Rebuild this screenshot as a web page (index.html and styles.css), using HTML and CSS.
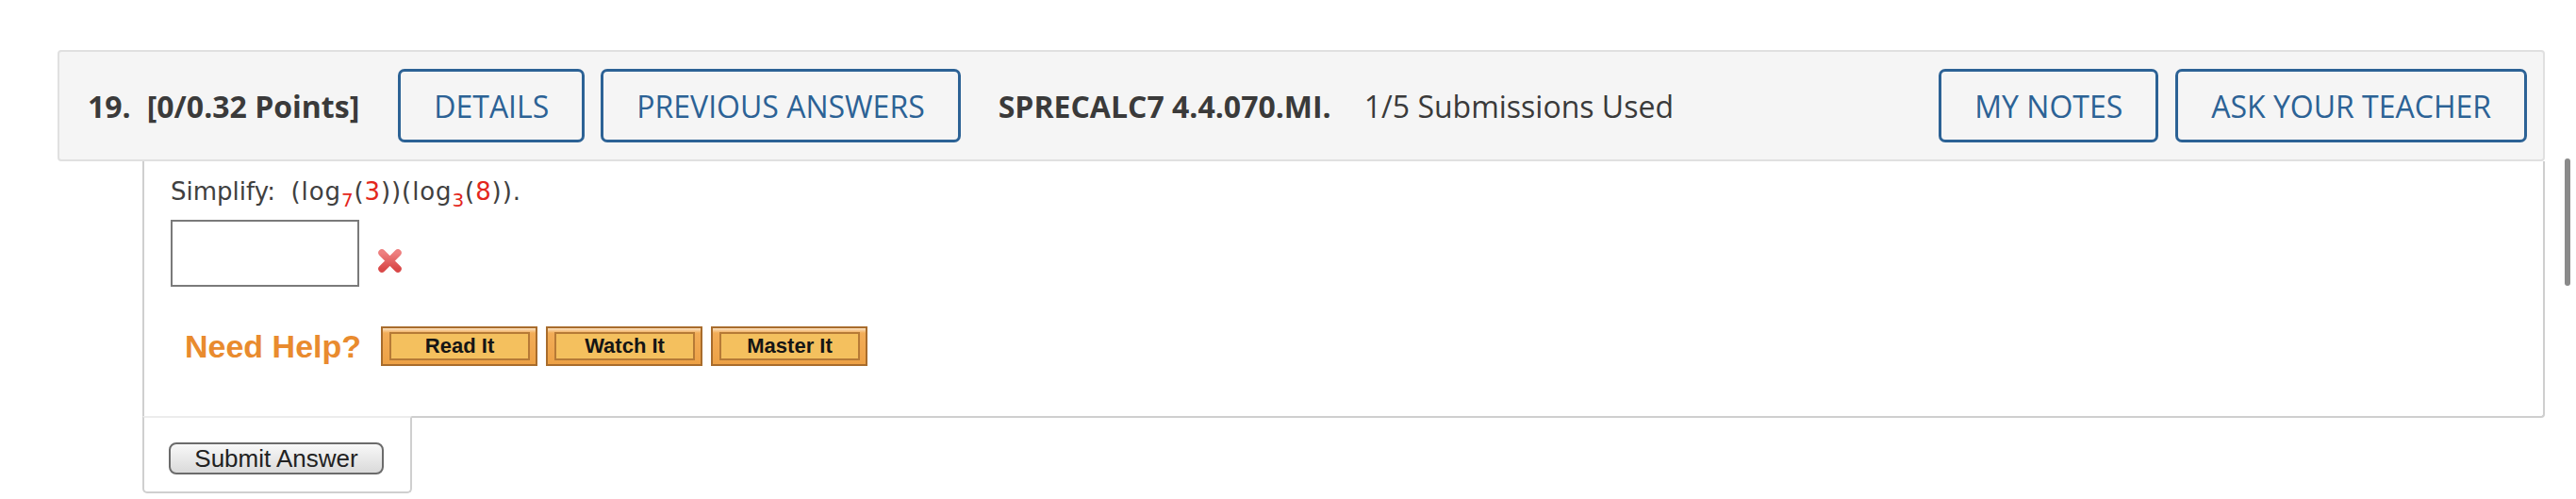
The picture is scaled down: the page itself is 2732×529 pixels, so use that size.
FILE: index.html
```html
<!DOCTYPE html>
<html lang="en">
<head>
<meta charset="utf-8">
<title>Question 19</title>
<link rel="stylesheet" href="styles.css">
</head>
<body>
<div class="page">
  <div class="question-header">
    <span class="q-num">19.</span>
    <span class="q-points">[0/0.32 Points]</span>
    <button class="hdr-btn btn-details">DETAILS</button>
    <button class="hdr-btn btn-prev">PREVIOUS ANSWERS</button>
    <span class="q-code">SPRECALC7 4.4.070.MI.</span>
    <span class="q-subs">1/5 Submissions Used</span>
    <span class="spacer"></span>
    <button class="hdr-btn">MY NOTES</button>
    <button class="hdr-btn btn-ask">ASK YOUR TEACHER</button>
  </div>
  <div class="question-body">
    <div class="prompt">Simplify:&nbsp; <span class="math">(log<sub class="red">7</sub>(<span class="red">3</span>))(log<sub class="red">3</sub>(<span class="red">8</span>)).</span></div>
    <div class="answer-row">
      <input class="answer-input" type="text" aria-label="answer">
      <svg class="wrong-mark" width="27" height="27" viewBox="0 0 27 27" aria-hidden="true">
        <defs>
          <linearGradient id="xg" x1="0" y1="0" x2="0" y2="1">
            <stop offset="0" stop-color="#ee8080"/>
            <stop offset="1" stop-color="#d94848"/>
          </linearGradient>
        </defs>
        <path d="M5 5 L22 22 M22 5 L5 22" stroke="url(#xg)" stroke-width="7.5" stroke-linecap="round"/>
      </svg>
    </div>
    <div class="help-row">
      <span class="need-help">Need Help?</span>
      <span class="help-btn first"><span class="help-inner">Read It</span></span>
      <span class="help-btn"><span class="help-inner">Watch It</span></span>
      <span class="help-btn"><span class="help-inner">Master It</span></span>
    </div>
  </div>
  <div class="submit-tab">
    <button class="submit-btn">Submit Answer</button>
  </div>
</div>
<div class="scroll-thumb"></div>
</body>
</html>
```
FILE: styles.css
```css
html, body {
  margin: 0;
  padding: 0;
  background: #ffffff;
}

.page {
  padding: 53px 0 0 61px;
  width: 2638px;
}

.question-header {
  box-sizing: border-box;
  height: 118px;
  display: flex;
  align-items: center;
  padding: 0 17px 0 30px;
  background: #f5f5f5;
  border: 2px solid #e0e0e0;
  border-radius: 4px;
  font-family: "Open Sans", "Liberation Sans", sans-serif;
  font-size: 32px;
  color: #3a3a3a;
}

.q-num {
  font-weight: 700;
}

.q-points {
  font-weight: 700;
  margin-left: 17px;
}

.hdr-btn {
  box-sizing: border-box;
  height: 78px;
  padding: 0 35px;
  border: 3px solid #2c6295;
  border-radius: 7px;
  background: transparent;
  color: #2c6295;
  font-family: "Open Sans", "Liberation Sans", sans-serif;
  font-size: 32px;
  font-weight: 400;
  white-space: nowrap;
}

.btn-details {
  margin-left: 41px;
}

.btn-prev {
  margin-left: 17px;
}

.q-code {
  font-weight: 700;
  margin-left: 40px;
}

.q-subs {
  margin-left: 35px;
}

.spacer {
  flex: 1;
}

.btn-ask {
  margin-left: 18px;
}

.question-body {
  margin-left: 90px;
  padding: 17px 28px 53px;
  border: 2px solid #cfcfcf;
  border-top: 0;
  border-bottom-right-radius: 4px;
}

.prompt {
  font-family: "DejaVu Sans", Verdana, sans-serif;
  font-size: 26px;
  line-height: 30px;
  height: 30px;
  color: #404040;
}

.math {
  letter-spacing: 0.9px;
}

.red {
  color: #e3261c;
}

sub.red {
  font-size: 20px;
  line-height: 0;
  vertical-align: -7px;
}

.answer-row {
  display: flex;
  align-items: flex-start;
  margin-top: 15px;
}

.answer-input {
  box-sizing: border-box;
  width: 200px;
  height: 71px;
  margin: 0;
  border: 2px solid #7a7a7a;
  background: #ffffff;
  padding: 0;
}

.wrong-mark {
  display: block;
  margin: 30px 0 0 19px;
}

.help-row {
  display: flex;
  align-items: center;
  margin-top: 42px;
  padding-left: 15px;
}

.need-help {
  font-family: "Liberation Sans", Arial, sans-serif;
  font-weight: 700;
  font-size: 34px;
  color: #e98b2e;
  margin-right: 21px;
}

.help-btn {
  box-sizing: border-box;
  width: 166px;
  height: 42px;
  padding: 4px 6px 4px 7px;
  margin-left: 9px;
  border: 2px solid #a86c2c;
  background: linear-gradient(#fbe2c2 0, #f2ad58 5px, #eda146 100%);
  display: flex;
}

.help-btn.first {
  margin-left: 0;
}

.help-inner {
  flex: 1;
  display: flex;
  align-items: center;
  justify-content: center;
  border: 2px solid #b67a36;
  background: #f4c05e;
  font-family: "Liberation Sans", Arial, sans-serif;
  font-weight: 700;
  font-size: 22px;
  color: #151515;
}

.submit-tab {
  box-sizing: border-box;
  width: 286px;
  margin: -2px 0 0 90px;
  padding: 26px 0 18px 26px;
  border: 2px solid #cfcfcf;
  border-top-color: #ececec;
  border-radius: 0 0 5px 5px;
}

.submit-btn {
  display: block;
  box-sizing: border-box;
  width: 228px;
  height: 34px;
  padding: 0;
  border: 2px solid #6b6b6b;
  border-radius: 8px;
  background: linear-gradient(#f8f8f8, #dadada);
  font-family: "Liberation Sans", Arial, sans-serif;
  font-size: 26px;
  line-height: 30px;
  color: #222222;
}

.scroll-thumb {
  position: fixed;
  top: 168px;
  right: 6px;
  width: 6px;
  height: 135px;
  border-radius: 3px;
  background: #8a8a8a;
}
```
